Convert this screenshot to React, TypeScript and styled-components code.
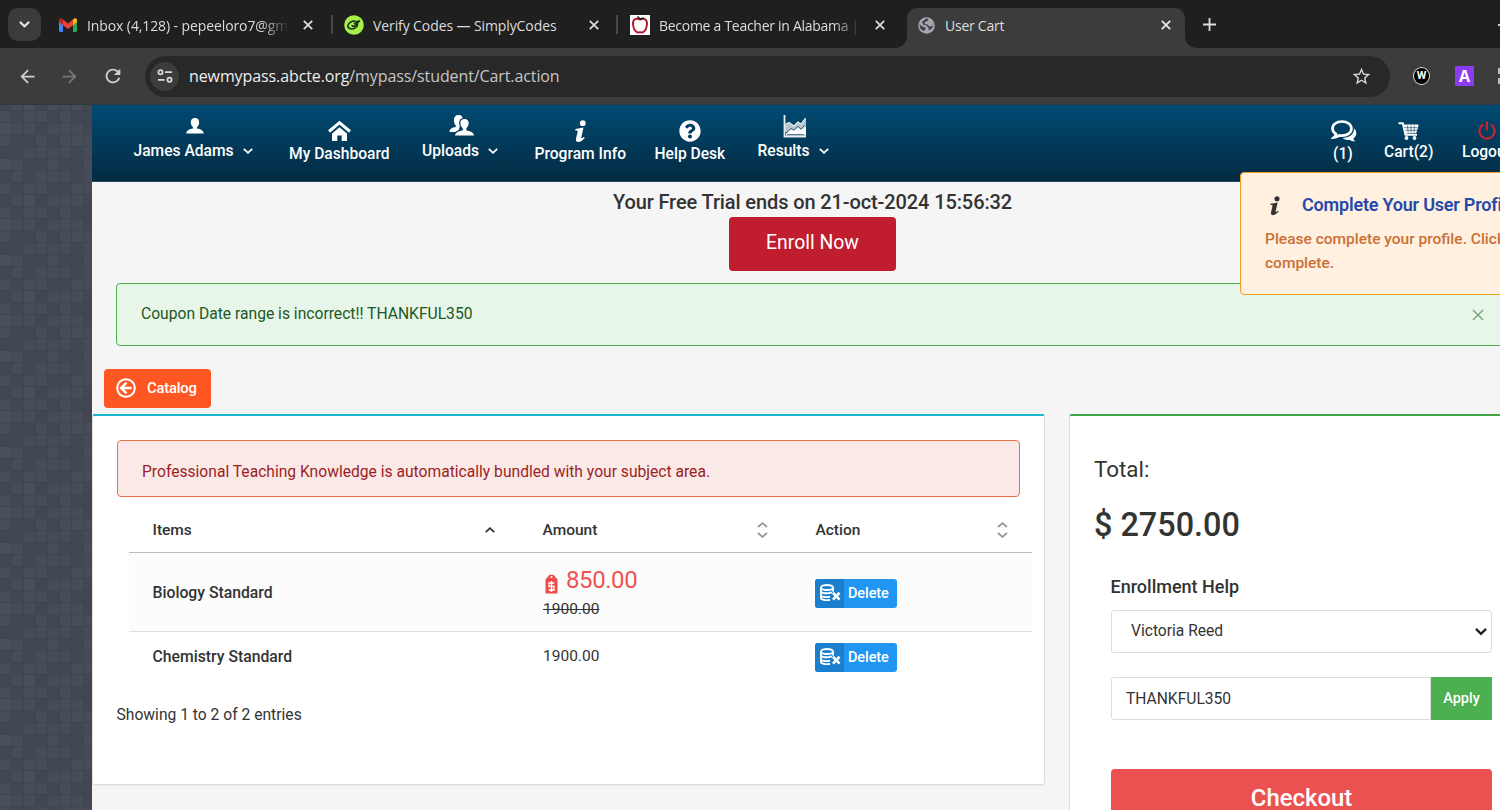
import React from "react";
import styled, { createGlobalStyle } from "styled-components";
import { MdArrowBack, MdArrowForward, MdRefresh, MdStarBorder } from "react-icons/md";
import { FaQuestionCircle } from "react-icons/fa";

const Global = createGlobalStyle`
  * { box-sizing: border-box; }
  body { margin: 0; background: #454b55; overflow: hidden; }
  button, input, select { font-family: inherit; }
`;

/* ---------- browser chrome ---------- */

const Screen = styled.div`
  width: 1500px;
  height: 810px;
  overflow: hidden;
  display: flex;
  flex-direction: column;
  font-family: Roboto, sans-serif;
  color: #333;
`;

const TabStrip = styled.div`
  height: 48px;
  flex: none;
  background: #1f1f1f;
  display: flex;
  padding: 8px 0 0 8px;
  font-family: "Open Sans", sans-serif;
  overflow: hidden;
`;

const TabSearch = styled.div`
  flex: none;
  width: 33px;
  height: 33px;
  border-radius: 10px;
  background: #3b3b3b;
  display: flex;
  align-items: center;
  justify-content: center;
`;

const Tab = styled.div<{ $w: number; $pad: number; $active?: boolean }>`
  position: relative;
  flex: none;
  width: ${(p) => p.$w}px;
  height: 40px;
  padding-left: ${(p) => p.$pad}px;
  display: flex;
  align-items: flex-start;
  background: ${(p) => (p.$active ? "#3c3c3c" : "transparent")};
  border-radius: 10px 10px 0 0;
  &::before, &::after {
    content: "";
    display: ${(p) => (p.$active ? "block" : "none")};
    position: absolute;
    bottom: 0;
    width: 11px;
    height: 11px;
  }
  &::before { left: -11px; background: radial-gradient(circle at 0 0, transparent 10.5px, #3c3c3c 11px); }
  &::after { right: -11px; background: radial-gradient(circle at 100% 0, transparent 10.5px, #3c3c3c 11px); }
`;

const TabIcon = styled.span<{ $gap: number }>`
  flex: none;
  width: 20px;
  height: 34px;
  margin-right: ${(p) => p.$gap}px;
  display: flex;
  align-items: center;
  justify-content: center;
`;

const TabTitle = styled.span<{ $w: number; $ls: number; $fade?: boolean }>`
  flex: none;
  width: ${(p) => p.$w}px;
  overflow: hidden;
  white-space: nowrap;
  line-height: 35px;
  font-size: 14px;
  letter-spacing: ${(p) => p.$ls}px;
  color: #dcdcdc;
  ${(p) => p.$fade && "mask-image: linear-gradient(90deg, #000 86%, transparent 100%);"}
`;

const TabClose = styled.span<{ $ml: number }>`
  flex: none;
  margin-left: ${(p) => p.$ml}px;
  height: 33px;
  display: flex;
  align-items: center;
`;

const TabDivider = styled.span`
  flex: none;
  width: 2px;
  height: 19px;
  margin: 7px 0 0;
  background: #484848;
`;

const Toolbar = styled.div`
  height: 57px;
  flex: none;
  background: #3c3c3c;
  display: flex;
  align-items: center;
  padding-bottom: 1px;
  color: #d0d0d0;
  box-shadow: inset 0 -1px #2e3940;
  & > * { flex: none; }
`;

const Omnibox = styled.div`
  width: 1245px;
  height: 41px;
  margin-left: 21px;
  border-radius: 21px;
  background: #282828;
  display: flex;
  align-items: center;
  padding: 0 18px 0 5px;
  font-family: "Open Sans", sans-serif;
`;

const SiteInfo = styled.span`
  width: 29px;
  height: 29px;
  border-radius: 50%;
  background: #3c3c3c;
  display: flex;
  align-items: center;
  justify-content: center;
`;

const Url = styled.span`
  flex: 1;
  margin-left: 10px;
  font-size: 16px;
  letter-spacing: -0.1px;
  color: #c6c6c6;
  b { font-weight: 400; color: #ededed; }
`;

const ExtensionW = styled.span`
  width: 17px;
  height: 18px;
  margin-left: 23px;
  border-radius: 50%;
  border: 1px solid #ddd;
  background: #000;
  color: #fff;
  font: 700 11px/16px Roboto, sans-serif;
  text-align: center;
`;

const ExtensionA = styled.span`
  width: 19px;
  height: 20px;
  margin-left: 25px;
  background: #8b3cf0;
  color: #fff;
  font: 700 16px/20px "Open Sans", sans-serif;
  text-align: center;
`;

const ExtensionCut = styled.span`
  width: 12px;
  height: 16px;
  margin-left: 24px;
  border: 2px dashed #bbb;
`;

/* ---------- page shell ---------- */

const shades = [
  "01001011", "20010001", "01101000", "11000010",
  "20110110", "10100010", "01001100", "10210001",
];
const tones = ["#464d58", "#424853", "#49505a"];
const cellLayer = shades
  .flatMap((row, y) =>
    [...row].map((c, x) => `linear-gradient(${tones[+c]}, ${tones[+c]}) ${x * 12}px ${y * 12}px / 11px 11px no-repeat`)
  )
  .join(",");

const Viewport = styled.div`
  flex: 1;
  min-height: 0;
  display: flex;
  overflow: hidden;
`;

const Backdrop = styled.div`
  flex: none;
  width: 92px;
  background: #3f4550;
  overflow: hidden;
`;

const BackdropTile = styled.div`
  width: 96px;
  height: 96px;
  background: ${cellLayer};
  &:first-child { margin-top: -90px; }
`;

const Page = styled.div`
  position: relative;
  flex: none;
  width: 1441px;
  background: #f5f5f5;
`;

const Nav = styled.nav`
  height: 77px;
  display: flex;
  padding-left: 41.5px;
  background: linear-gradient(#004a73, #042b42);
  border-bottom: 1px solid #1c4a63;
  color: #fff;
  font-weight: 500;
`;

const NavItem = styled.div<{ $w: number; $ml?: number; $top: number; $label: number; $nudge?: number }>`
  flex: none;
  width: ${(p) => p.$w}px;
  margin-left: ${(p) => p.$ml ?? 0}px;
  padding-top: ${(p) => p.$top}px;
  display: flex;
  flex-direction: column;
  align-items: center;
  & > svg { flex: none; height: 24px; margin-left: ${(p) => p.$nudge ?? 0}px; }
  & > span {
    width: 100%;
    margin-top: ${(p) => p.$label}px;
    display: flex;
    justify-content: space-between;
    align-items: center;
    white-space: nowrap;
    font-size: 15.6px;
    line-height: 20px;
  }
`;

const Trial = styled.section`
  display: flex;
  flex-direction: column;
  align-items: center;
  padding-top: 7px;
`;

const TrialText = styled.h2`
  margin: 0;
  font-size: 20px;
  line-height: 26px;
  font-weight: 500;
  letter-spacing: -0.11px;
  white-space: nowrap;
`;

const EnrollButton = styled.button`
  width: 167px;
  height: 54px;
  margin-top: 2px;
  padding: 0 0 3px;
  border: 0;
  border-radius: 4px;
  background: #c01d2e;
  color: #fff;
  font-size: 19.4px;
  font-weight: 400;
`;

const CouponAlert = styled.div`
  display: flex;
  align-items: center;
  justify-content: space-between;
  height: 63px;
  margin: 12px 24px 0;
  padding: 0 24px;
  border: 1px solid #4caf50;
  border-radius: 4px;
  background: #e8f5e9;
  color: #205823;
  font-size: 15.65px;
  & > span { margin-top: -2px; }
`;

const CatalogButton = styled.button`
  display: flex;
  align-items: center;
  gap: 11px;
  width: 107px;
  height: 39px;
  margin: 23px 0 6px 12px;
  padding: 0 0 1px 12px;
  border: 0;
  border-radius: 4px;
  background: #ff5722;
  color: #fff;
  font-size: 14.8px;
  font-weight: 500;
  letter-spacing: -0.2px;
`;

const Columns = styled.div`
  display: flex;
  gap: 24px;
  align-items: flex-start;
`;

const Card = styled.section<{ $w: number; $h: number; $accent: string; $pad: string }>`
  width: ${(p) => p.$w}px;
  height: ${(p) => p.$h}px;
  flex: none;
  padding: ${(p) => p.$pad};
  background: #fff;
  border: 1px solid #ddd;
  border-top: 2px solid ${(p) => p.$accent};
  border-radius: 3px;
  box-shadow: 0 1px 1px rgba(0, 0, 0, 0.05);
`;

const BundleAlert = styled.div`
  height: 57px;
  padding-left: 24px;
  padding-top: 5px;
  display: flex;
  align-items: center;
  border: 1px solid #e8704a;
  border-radius: 4px;
  background: #fbe9e7;
  color: #9c1f1f;
  font-size: 15.64px;
`;

/* ---------- cart table ---------- */

const Table = styled.div`
  width: 903px;
  margin-left: 12px;
  font-size: 15.5px;
`;

const Row = styled.div<{ $h: number; $head?: boolean; $tint?: boolean }>`
  display: grid;
  grid-template-columns: 390px 273px 240px;
  align-items: center;
  height: ${(p) => p.$h}px;
  background: ${(p) => (p.$tint ? "#fcfcfc" : "#fff")};
  border-bottom: ${(p) => (p.$head ? "1px solid #bbb" : p.$tint ? "1px solid #ddd" : "0")};
`;

const HeadCell = styled.div`
  display: flex;
  align-items: center;
  justify-content: space-between;
  height: 100%;
  padding: 18px 24px 7px 23.5px;
  font-weight: 500;
`;

const Cell = styled.div<{ $strong?: boolean }>`
  padding-left: ${(p) => (p.$strong ? 23.5 : 24)}px;
  font-weight: ${(p) => (p.$strong ? 500 : 400)};
  font-size: ${(p) => (p.$strong ? 15.75 : 15.5)}px;
  s { display: block; line-height: 22px; }
`;

const Discount = styled.div`
  display: flex;
  align-items: center;
  gap: 8px;
  height: 34px;
  margin-top: -1px;
  padding-bottom: 2px;
  color: #ef5350;
  font-size: 24px;
  letter-spacing: -0.42px;
  svg { margin: 8px 0 0 2px; }
`;

const DeleteButton = styled.button`
  display: flex;
  align-items: center;
  width: 82px;
  height: 29px;
  margin-left: -1px;
  margin-top: 2px;
  padding: 0;
  border: 0;
  border-radius: 3px;
  overflow: hidden;
  background: #2196f3;
  color: #fff;
  font-size: 14.5px;
  font-weight: 500;
  span { flex: 1; padding-left: 4px; text-align: left; letter-spacing: -0.1px; }
`;

const DeleteIcon = styled.i`
  width: 29px;
  height: 29px;
  padding-left: 1px;
  display: flex;
  align-items: center;
  justify-content: center;
  background: #1b7fd0;
`;

const EntryCount = styled.p`
  margin: 22px 0 0 -0.5px;
  font-size: 15.65px;
  line-height: 25px;
`;

/* ---------- order summary ---------- */

const TotalLabel = styled.div`
  font-size: 22.4px;
  line-height: 30px;
`;

const TotalValue = styled.div`
  margin-top: 21px;
  font-size: 32.4px;
  line-height: 40px;
  font-weight: 500;
`;

const CheckoutForm = styled.div`
  width: 381px;
  margin: 30px 0 0 17px;
  display: flex;
  flex-direction: column;
`;

const FormTitle = styled.div`
  margin: 0 0 11px -0.5px;
  font-size: 18px;
  line-height: 24px;
  font-weight: 500;
`;

const SelectBox = styled.div`
  height: 43px;
  padding: 0 4px 2px 19px;
  display: flex;
  align-items: center;
  justify-content: space-between;
  border: 1px solid #ddd;
  border-radius: 3px;
  font-size: 15.6px;
  svg { margin-top: 3px; }
`;

const CouponRow = styled.div`
  display: flex;
  height: 43px;
  margin-top: 24px;
`;

const CouponInput = styled.input`
  width: 320px;
  padding: 0 0 0 14px;
  border: 1px solid #ddd;
  border-radius: 3px 0 0 3px;
  color: #333;
  font-size: 15.6px;
`;

const ApplyButton = styled.button`
  flex: 1;
  padding: 0;
  border: 0;
  background: #4caf50;
  color: #fff;
  font-size: 14.5px;
  font-weight: 500;
`;

const CheckoutButton = styled.button`
  height: 60px;
  margin-top: 49px;
  padding: 0 0 3px;
  border: 0;
  border-radius: 4px;
  background: #ec5151;
  color: #fff;
  font-size: 23.9px;
  font-weight: 500;
`;

/* ---------- profile notice ---------- */

const Notice = styled.aside`
  position: absolute;
  left: 1148px;
  top: 67px;
  width: 370px;
  height: 123px;
  padding: 19px 0 0 24px;
  border: 1px solid #f0a020;
  border-radius: 4px;
  background: #fff0df;
  color: #cc6f35;
  font-size: 15.5px;
  line-height: 24px;
  font-weight: 500;
  white-space: nowrap;
`;

const NoticeTitle = styled.div`
  display: flex;
  align-items: center;
  gap: 21px;
  height: 26px;
  margin-bottom: 9px;
  color: #2449a8;
  font-size: 18px;
  font-weight: 600;
  letter-spacing: -0.2px;
`;

const NoticeIcon = styled.span`
  display: flex;
  padding-left: 4px;
  color: #333;
`;

/* ---------- drawings ---------- */

const Cross = ({ size, color, stroke = 1.8 }: { size: number; color: string; stroke?: number }) => (
  <svg width={size} height={size} viewBox="0 0 10 10" stroke={color} strokeWidth={stroke}>
    <path d="M.8.8l8.4 8.4M9.2.8L.8 9.2" />
  </svg>
);

const Chevron = ({ w = 10, up = false, color = "currentColor", stroke = 1.8 }: { w?: number; up?: boolean; color?: string; stroke?: number }) => (
  <svg width={w} height={w * 0.6} viewBox="0 0 10 6" fill="none" stroke={color} strokeWidth={stroke}>
    <path d={up ? "M.8 5.2L5 1.2l4.2 4" : "M.8.8L5 4.8l4.2-4"} />
  </svg>
);

const SortIcon = () => (
  <svg width="11" height="16" viewBox="0 0 11 16" fill="none" stroke="#999" strokeWidth="1.7">
    <path d="M1 5l4.5-4L10 5M1 11l4.5 4L10 11" />
  </svg>
);

const Gmail = () => (
  <svg width="18" height="14" viewBox="0 0 18 14">
    <path fill="#4285f4" d="M0 2.2v10.6C0 13.5.5 14 1.2 14H4V5z" />
    <path fill="#34a853" d="M18 2.2v10.6c0 .7-.5 1.2-1.2 1.2H14V5z" />
    <path fill="#ea4335" d="M4 7.2V1.6l5 3.8 5-3.8v5.6L9 11z" />
    <path fill="#c5221f" d="M0 2.2v1.9l4 3.1V1.6L3 .8C1.8-.2 0 .5 0 2.2z" />
    <path fill="#fbbc04" d="M18 2.2v1.9l-4 3.1V1.6L15 .8c1.2-1 3-.3 3 1.4z" />
  </svg>
);

const CodesLogo = () => (
  <svg width="20" height="20" viewBox="0 0 20 20" fill="none">
    <circle cx="10" cy="10" r="9.8" fill="#a6f04c" />
    <path d="M11.5 6.2C8.5 5.5 4 8 3.8 11c-.1 3 5 4 8 1.5 1.7-1.5 2-3 1.2-4M7.500 10.500l2.500 1 6-6M10 9l3-2.500 2.500-.5" stroke="#152b12" strokeWidth="1.5" />
  </svg>
);

const AppleLogo = () => (
  <svg width="20" height="20" viewBox="0 0 20 20" fill="none">
    <path fill="#fff" d="M0 0h20v20H0z" />
    <path d="M10 4.5C6 2.5 2.8 4.5 3 9c.2 4.5 2.5 8 4.5 8.5 1 .2 1.5-.4 2.5-.4s1.500.6 2.500.4C14.500 17 16.800 13.500 17 9c.2-4.500-3-6.500-7-4.500z" stroke="#b51224" strokeWidth="1.900" />
    <path d="M11 5L7.500 1.500M10 4l3.500-1" stroke="#222" strokeWidth="1.600" />
  </svg>
);

const Globe = () => (
  <svg width="17" height="17" viewBox="0 0 17 17">
    <circle cx="8.500" cy="8.500" r="8.300" fill="#a4a7ad" />
    <path d="M1.500 7.500l4 2.500 2 .5v2l-2 1.500C3 13 1.500 11 1.500 7.500zM8 1.500l2.500.5-1 2-2.500 1-.5 2 3 .5 2 2 3-.5.500-3c.5 3-.5 6-4 7.500l-.5-2.500-2-2.500-3.500-1L4 5z" fill="#3f4247" />
  </svg>
);

const TuneIcon = () => (
  <svg width="16" height="14" viewBox="0 0 16 14" fill="none" stroke="#d8d8d8" strokeWidth="1.8">
    <circle cx="3.500" cy="3.200" r="2.100" />
    <path d="M8 3.200h7M1 10.800h6.500" />
    <circle cx="12.500" cy="10.800" r="2.100" />
  </svg>
);

const Person = () => (
  <svg width="18" height="24" viewBox="0 0 18 24" fill="currentColor">
    <path d="M9 4c3 0 4.300 2 4.200 4.500-.1 2-1 3.800-2.200 4.700v1.300c3.500.5 6.500 2 6.800 5H.2c.3-3 3.300-4.500 6.800-5v-1.300C5.800 12.300 4.900 10.500 4.800 8.500 4.700 6 6 4 9 4z" />
  </svg>
);

const People = () => (
  <svg width="26" height="24" viewBox="0 0 26 24" fill="currentColor">
    <path d="M9.500 1c3 0 4.500 2 4.400 4.600-.1 2.400-1 4-2.400 5.100L9 18H.5c0-3 2.700-4.500 6.300-5v-1.600C5.600 10.300 4.900 8.400 4.900 6 4.900 3 6.500 1 9.500 1z" />
    <path stroke="#073d5d" strokeWidth="1.200" d="M15.500 4.300c3.300 0 4.900 2.200 4.800 5-.1 2.300-1 4.200-2.400 5.200v1.300c4.500.6 7.600 2.300 7.800 6.200H5.300c.2-3.900 3.300-5.600 7.800-6.200v-1.300c-1.400-1-2.300-2.900-2.400-5.200-.1-2.800 1.500-5 4.800-5z" />
  </svg>
);

const House = () => (
  <svg width="23" height="24" viewBox="0 0 23 24" fill="none">
    <path d="M1 12.500L11.500 3.700 22 12.500" stroke="#fff" strokeWidth="3" />
    <path d="M4 14.500l7.500-6.300 7.500 6.300V22h-5.300v-5.500H9.300V22H4z" fill="#fff" />
  </svg>
);

const InfoGlyph = ({ w = 13, h = 24 }: { w?: number; h?: number }) => (
  <svg width={w} height={h} viewBox="0 0 13 24" fill="currentColor">
    <circle cx="8.800" cy="4.200" r="2.900" />
    <path d="M1.500 10c2.800-.2 5.400-.8 8-1.400L7.300 18.500c-.3 1.300.6 1 2.600-.6l.9.8C8.800 21.500 6.500 23 4.300 23 2.200 23 1.500 21.600 2 19.500l1.600-6.600c.3-1.300-.2-1.600-2.500-1.500z" />
  </svg>
);

const AreaChart = () => (
  <svg width="24" height="24" viewBox="0 0 24 24" fill="none">
    <path d="M2 18V10l4-1 5 3 4-4 3 2 5-6v14z" fill="#b3c6d1" />
    <path d="M3 19.500l5-4 3 1.500 4-3 3 2.500 5-4v9H3z" fill="#fff" />
    <path d="M1.500 1v21.500H23" stroke="#e8eff3" strokeWidth="1.800" />
    <path d="M3 10l3-1.500 5 3.500 4-4 3 2 4.500-6" stroke="#e8eff3" strokeWidth="1.200" />
    <path d="M4 18l4-3.500 3 1.500 4-4 3 3 4-4M4 20.500h17" stroke="#31556d" strokeWidth=".8" />
  </svg>
);

const Chats = () => (
  <svg width="26" height="24" viewBox="0 0 26 24">
    <path fill="#fff" d="M23 9.500c3.400 3 3 7.500-.5 10 0 1.300 1 2.200 2.200 2.800-2.500.2-4.500-.3-6-1.300-3 .2-5.500-.5-7-2 6.500 0 11.300-3.500 11.300-9.500z" />
    <path fill="none" stroke="#fff" strokeWidth="2.700" d="M11 2.500c5.500 0 9.400 3 9.400 7s-3.900 7.200-9.400 7.200c-1 0-2-.1-2.900-.3-1.300 1-3 1.700-5 1.900 1.200-1 1.800-2 1.800-3.300C2.900 13.700 1.500 11.700 1.500 9.500c0-4 4-7 9.500-7z" />
  </svg>
);

const Cart = () => (
  <svg width="21" height="24" viewBox="0 0 21 24" fill="none" stroke="#fff">
    <path d="M.5 4.300h4.300l2.700 11.500H19" strokeWidth="2" />
    <path d="M5.500 6h14.700L18 13.500 7.500 14z" fill="#fff" strokeWidth="1" />
    <path d="M6 8.700h13.500M7 11.300h12M9.500 6.500l.7 7M13 6.500v7M16.500 6.500l-.5 7" stroke="#0a3c58" strokeWidth=".6" />
    <circle cx="8.500" cy="19" r="1.900" fill="#fff" strokeWidth="0" />
    <circle cx="16.500" cy="19" r="1.900" fill="#fff" strokeWidth="0" />
  </svg>
);

const Power = () => (
  <svg width="18" height="24" viewBox="0 0 18 24" fill="none" stroke="#c9232b" strokeWidth="2.200">
    <path d="M5 5.500a7.600 7.600 0 1 0 8 0M9 2.500v9" />
  </svg>
);

const CircleArrow = () => (
  <svg width="20" height="20" viewBox="0 0 20 20" fill="none" stroke="#fff">
    <circle cx="10" cy="10" r="8.800" strokeWidth="2" />
    <path d="M10.500 4.700L5.200 10l5.300 5.300M5.500 10h10" strokeWidth="2.500" />
  </svg>
);

const PriceTag = () => (
  <svg width="13" height="20" viewBox="0 0 13 20">
    <path fill="#ec4b4b" d="M.5 5.500L4.500.8h4l4 4.700v14H.5z" />
    <circle cx="6.500" cy="3" r="1.100" fill="#fff" />
    <path d="M9.300 9H4v3.500h5V16H3.700M6.500 7v11" fill="none" stroke="#fff" strokeWidth="1.300" />
  </svg>
);

const DatabaseRemove = () => (
  <svg width="21" height="18" viewBox="0 0 21 18" fill="none" stroke="#fff" strokeWidth="1.900">
    <ellipse cx="7" cy="3.500" rx="6" ry="2.500" />
    <path d="M1 4v10c0 1.700 4 2.500 9 2M1 7.500c.5 1.800 6 2.500 11 .8M1 11.500c.5 1.500 5 2 9 1.300M13 4v3.500" />
    <path d="M13 8.800l6.500 6.800M19.500 8.800L13 15.600" strokeWidth="2.700" />
  </svg>
);

/* ---------- app ---------- */

const items = [
  { name: "Biology Standard", amount: "1900.00", sale: "850.00", height: 79 },
  { name: "Chemistry Standard", amount: "1900.00", sale: null, height: 48 },
];

export default function App() {
  return (
    <Screen>
      <Global />
      <TabStrip>
        <TabSearch><Chevron w={11} color="#e3e3e3" stroke={1.9} /></TabSearch>
        <Tab $w={290} $pad={17}>
          <TabIcon $gap={9}><Gmail /></TabIcon>
          <TabTitle $w={202} $ls={-0.1} $fade>Inbox (4,128) - pepeeloro7@gm</TabTitle>
          <TabClose $ml={14}><Cross size={10} color="#dcdcdc" /></TabClose>
        </Tab>
        <TabDivider />
        <Tab $w={283} $pad={11}>
          <TabIcon $gap={9}><CodesLogo /></TabIcon>
          <TabTitle $w={188} $ls={-0.1}>Verify Codes — SimplyCodes</TabTitle>
          <TabClose $ml={28}><Cross size={10} color="#dcdcdc" /></TabClose>
        </Tab>
        <TabDivider />
        <Tab $w={289} $pad={12}>
          <TabIcon $gap={9}><AppleLogo /></TabIcon>
          <TabTitle $w={202} $ls={-0.28} $fade>Become a Teacher in Alabama |</TabTitle>
          <TabClose $ml={14}><Cross size={10} color="#dcdcdc" /></TabClose>
        </Tab>
        <Tab $w={278} $pad={9} $active>
          <TabIcon $gap={9}><Globe /></TabIcon>
          <TabTitle $w={190} $ls={-0.25}>User Cart</TabTitle>
          <TabClose $ml={26}><Cross size={10} color="#e8e8e8" /></TabClose>
        </Tab>
        <TabClose $ml={18}>
          <svg width="13" height="13" viewBox="0 0 13 13" stroke="#ddd" strokeWidth="1.8"><path d="M6.500 0v13M0 6.500h13" /></svg>
        </TabClose>
        <TabClose $ml={282}>
          <svg width="12" height="2" viewBox="0 0 12 2"><path d="M0 0h12v2H0z" fill="#ccc" /></svg>
        </TabClose>
      </TabStrip>
      <Toolbar>
        <MdArrowBack size={21} style={{ marginLeft: 17 }} />
        <MdArrowForward size={21} color="#777" style={{ marginLeft: 21 }} />
        <MdRefresh size={22} style={{ marginLeft: 22 }} />
        <Omnibox>
          <SiteInfo><TuneIcon /></SiteInfo>
          <Url><b>newmypass.abcte.org</b>/mypass/student/Cart.action</Url>
          <MdStarBorder size={21} color="#d8d8d8" />
        </Omnibox>
        <ExtensionW>W</ExtensionW>
        <ExtensionA>A</ExtensionA>
        <ExtensionCut />
      </Toolbar>
      <Viewport>
        <Backdrop>
          {Array.from({ length: 9 }, (_, i) => <BackdropTile key={i} />)}
        </Backdrop>
        <Page>
          <Nav>
            <NavItem $w={119} $top={9} $label={3} $nudge={3}><Person /><span>James Adams <Chevron /></span></NavItem>
            <NavItem $w={101} $ml={36.5} $top={14} $label={1}><House /><span>My Dashboard</span></NavItem>
            <NavItem $w={76} $ml={32} $top={9} $label={3} $nudge={3}><People /><span>Uploads <Chevron /></span></NavItem>
            <NavItem $w={92} $ml={36.5} $top={14} $label={1}><InfoGlyph /><span>Program Info</span></NavItem>
            <NavItem $w={71} $ml={28} $top={14} $label={1}><FaQuestionCircle size={22} /><span>Help Desk</span></NavItem>
            <NavItem $w={71} $ml={32} $top={9} $label={3} $nudge={4}><AreaChart /><span>Results <Chevron /></span></NavItem>
            <NavItem $w={20} $ml={504.500} $top={14} $label={1} $nudge={2}><Chats /><span>(1)</span></NavItem>
            <NavItem $w={49} $ml={31} $top={14} $label={-1}><Cart /><span>Cart(2)</span></NavItem>
            <NavItem $w={50} $ml={29} $top={14} $label={-1}><Power /><span>Logout</span></NavItem>
          </Nav>
          <Trial>
            <TrialText>Your Free Trial ends on 21-oct-2024 15:56:32</TrialText>
            <EnrollButton>Enroll Now</EnrollButton>
          </Trial>
          <CouponAlert>
            <span>Coupon Date range is incorrect!! THANKFUL350</span>
            <Cross size={12} color="#7fa982" stroke={1.3} />
          </CouponAlert>
          <CatalogButton><CircleArrow />Catalog</CatalogButton>
          <Columns>
            <Card $w={953} $h={371} $accent="#1cb5cc" $pad="24px 24px 0">
              <BundleAlert>Professional Teaching Knowledge is automatically bundled with your subject area.</BundleAlert>
              <Table>
                <Row $h={56} $head>
                  <HeadCell>Items <Chevron w={10} up color="#333" /></HeadCell>
                  <HeadCell>Amount <SortIcon /></HeadCell>
                  <HeadCell>Action <SortIcon /></HeadCell>
                </Row>
                {items.map((item) => (
                  <Row key={item.name} $h={item.height} $tint={!!item.sale}>
                    <Cell $strong>{item.name}</Cell>
                    <Cell>
                      {item.sale ? (
                        <>
                          <Discount><PriceTag />{item.sale}</Discount>
                          <s>{item.amount}</s>
                        </>
                      ) : item.amount}
                    </Cell>
                    <Cell>
                      <DeleteButton><DeleteIcon><DatabaseRemove /></DeleteIcon><span>Delete</span></DeleteButton>
                    </Cell>
                  </Row>
                ))}
              </Table>
              <EntryCount>Showing 1 to 2 of 2 entries</EntryCount>
            </Card>
            <Card $w={465} $h={460} $accent="#43a447" $pad="38px 24px 0">
              <TotalLabel>Total:</TotalLabel>
              <TotalValue>$ 2750.00</TotalValue>
              <CheckoutForm>
                <FormTitle>Enrollment Help</FormTitle>
                <SelectBox>Victoria Reed <Chevron w={12} color="#222" stroke={2} /></SelectBox>
                <CouponRow>
                  <CouponInput defaultValue="THANKFUL350" />
                  <ApplyButton>Apply</ApplyButton>
                </CouponRow>
                <CheckoutButton>Checkout</CheckoutButton>
              </CheckoutForm>
            </Card>
          </Columns>
          <Notice>
            <NoticeTitle><NoticeIcon><InfoGlyph w={12} h={21} /></NoticeIcon>Complete Your User Profile</NoticeTitle>
            Please complete your profile. Click here to<br />complete.
          </Notice>
        </Page>
      </Viewport>
    </Screen>
  );
}
